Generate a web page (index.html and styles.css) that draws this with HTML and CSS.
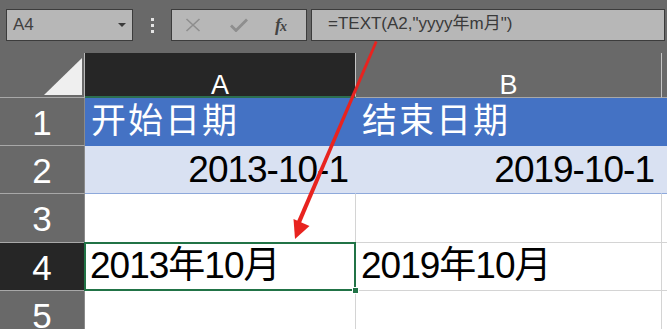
FILE: index.html
```html
<!DOCTYPE html>
<html lang="zh-CN">
<head>
<meta charset="utf-8">
<title>TEXT</title>
<link rel="stylesheet" href="styles.css">
</head>
<body>
<div class="app">
  <div class="toolbar">
    <div class="namebox">
      <span class="name">A4</span>
      <span class="caret"></span>
    </div>
    <div class="dots"><i></i><i></i><i></i></div>
    <div class="fbtns">
      <svg class="ico" width="16" height="14" viewBox="0 0 16 14"><path d="M1.5 1 L14.5 13 M14.5 1 L1.5 13" stroke="#8e8e8e" stroke-width="1.6" fill="none"/></svg>
      <svg class="ico" width="18" height="14" viewBox="0 0 18 14"><path d="M1 7.5 L6 12.5 L17 1.5" stroke="#8e8e8e" stroke-width="2.8" fill="none"/></svg>
      <span class="fx">f<span class="x">x</span></span>
    </div>
    <div class="formula">=TEXT(A2,"yyyy年m月")</div>
  </div>

  <div class="sheet">
    <div class="corner"><span class="tri"></span></div>
    <div class="colhead sel-col">A</div>
    <div class="colhead">B</div>
    <div class="colhead last"></div>

    <div class="rowhead">1</div>
    <div class="cell hdr">开始日期</div>
    <div class="cell hdr">结束日期</div>
    <div class="cell hdr"></div>

    <div class="rowhead">2</div>
    <div class="cell band num">2013-10-1</div>
    <div class="cell band num">2019-10-1</div>
    <div class="cell band"></div>

    <div class="rowhead tall">3</div>
    <div class="cell"></div>
    <div class="cell"></div>
    <div class="cell"></div>

    <div class="rowhead sel-row">4</div>
    <div class="cell active">2013年10月<span class="selbox"></span><span class="handle"></span></div>
    <div class="cell">2019年10月</div>
    <div class="cell"></div>

    <div class="rowhead">5</div>
    <div class="cell"></div>
    <div class="cell"></div>
    <div class="cell"></div>
  </div>

  <svg class="arrow" width="667" height="329" viewBox="0 0 667 329">
    <polygon points="375,41 377.5,42 300.5,224 296.5,222.5" fill="#e8231f"/>
    <polygon points="295,239 293.5,219 309.5,226" fill="#e8231f"/>
  </svg>
</div>
</body>
</html>
```

FILE: styles.css
```css
* { box-sizing: border-box; }
html, body { margin: 0; padding: 0; }
body {
  width: 667px;
  height: 329px;
  overflow: hidden;
  background: #696969;
  font-family: "Liberation Sans", "Noto Sans CJK SC", sans-serif;
}
.app { position: relative; width: 667px; height: 329px; }

.toolbar {
  height: 53px;
  display: flex;
  align-items: flex-start;
  padding: 9px 0 0 6px;
  background: #696969;
}
.namebox {
  width: 127px;
  height: 32px;
  background: #b7b7b7;
  border: 1px solid #3c3c3c;
  display: flex;
  align-items: center;
  justify-content: space-between;
  padding: 0 6px 0 6px;
}
.name { font-size: 17px; color: #404040; }
.caret {
  width: 0; height: 0;
  border-left: 4px solid transparent;
  border-right: 4px solid transparent;
  border-top: 4px solid #3a3a3a;
}
.dots {
  width: 38px;
  height: 32px;
  display: flex;
  flex-direction: column;
  align-items: center;
  justify-content: center;
  gap: 3px;
}
.dots i { display: block; width: 3px; height: 3px; background: #e4e4e4; }
.fbtns {
  width: 136px;
  height: 32px;
  background: #b7b7b7;
  border: 1px solid #3c3c3c;
  display: flex;
  align-items: center;
  padding: 0 0 0 13px;
  gap: 0;
}
.fbtns .ico:first-child { margin-right: 29px; }
.fbtns .ico:nth-child(2) { margin-right: 27px; }
.fx {
  font-family: "Liberation Serif", serif;
  font-style: italic;
  font-weight: bold;
  font-size: 18px;
  color: #444;
  letter-spacing: -1px;
}
.fx .x { font-size: 14px; }
.formula {
  margin-left: 4px;
  width: 354px;
  height: 32px;
  background: #b7b7b7;
  border: 1px solid #3c3c3c;
  font-size: 17px;
  line-height: 28px;
  color: #3a3a3a;
  padding-left: 16px;
  white-space: nowrap;
}

.sheet {
  display: grid;
  grid-template-columns: 85px 271px 306px 1fr;
  grid-template-rows: 45px 48px 48px 49px 48px 40px;
  background: #fff;
}
.corner {
  background: #696969;
  border-right: 1px solid #b9b9b9;
  border-bottom: 1px solid #a8a8a8;
  position: relative;
}
.tri {
  position: absolute;
  right: 2px;
  bottom: 2px;
  width: 0; height: 0;
  border-left: 38px solid transparent;
  border-bottom: 37px solid #efefef;
}
.colhead {
  background: #696969;
  color: #fff;
  font-size: 27px;
  text-align: center;
  line-height: 27px;
  padding-top: 19px;
  border-right: 1px solid #c4c4c4;
  border-bottom: 1px solid #a8a8a8;
}
.colhead.sel-col {
  background: #262626;
  border-bottom: 2px solid #2c6e50;
}
.colhead.last { border-right: none; }

.rowhead {
  background: #696969;
  color: #fff;
  font-size: 35px;
  text-align: center;
  line-height: 48px;
  border-right: 1px solid #8a8a8a;
  border-bottom: 1px solid #a8a8a8;
  padding-top: 1px;
}
.rowhead.sel-row { background: #262626; border-right: 1px solid #217346; }

.cell {
  position: relative;
  font-size: 37px;
  letter-spacing: -1px;
  line-height: 46px;
  color: #000;
  padding: 0 0 0 5px;
  white-space: nowrap;
  border-right: 1px solid #d4d4d4;
  border-bottom: 1px solid #d4d4d4;
}
.cell.active { z-index: 2; }
.cell.hdr {
  background: #4472c4;
  color: #fff;
  letter-spacing: 2px;
  border-color: #4472c4;
  font-size: 35px;
  padding-left: 6px;
}
.cell.band {
  background: #d9e1f2;
  border-right-color: #d9e1f2;
  border-bottom-color: #8ea9db;
}
.cell.num { text-align: right; padding-right: 7px; line-height: 48px; }

.selbox {
  position: absolute;
  left: -1px; top: -1px; right: -1px; bottom: -1px;
  border: 2px solid #217346;
}
.handle {
  position: absolute;
  right: -4px; bottom: -4px;
  width: 7px; height: 7px;
  background: #217346;
  border: 1px solid #fff;
}
.arrow { position: absolute; left: 0; top: 0; pointer-events: none; z-index: 3; }
```
